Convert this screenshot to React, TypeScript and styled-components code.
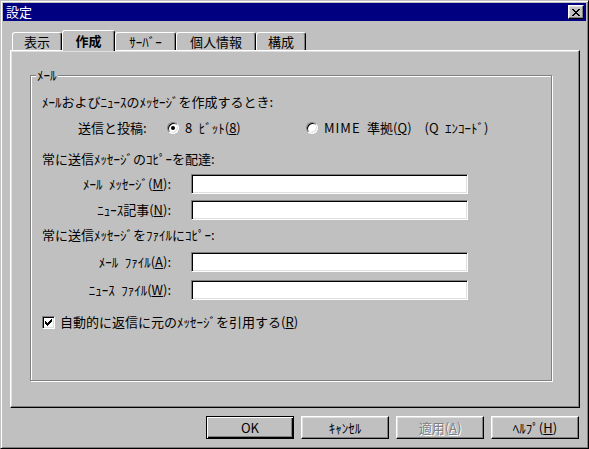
import React from 'react';
import styled, { createGlobalStyle, css } from 'styled-components';

const GlobalStyle = createGlobalStyle`
  html, body { margin: 0; padding: 0; background: #c0c0c0; }
  body {
    font-family: "Noto Sans CJK JP", "Noto Sans", sans-serif;
    font-size: 13px;
    color: #000;
  }
  * { box-sizing: border-box; }
`;

const Window = styled.div`
  width: 589px;
  height: 449px;
  background: #c0c0c0;
  border: 1px solid;
  border-color: #c0c0c0 #000 #000 #c0c0c0;
  box-shadow: inset 1px 1px #fff, inset -1px -1px #808080;
  padding: 2px;
  display: flex;
  flex-direction: column;
`;

const TitleBar = styled.div`
  height: 18px;
  flex: none;
  background: #000080;
  display: flex;
  align-items: center;
  justify-content: space-between;
  padding: 0 2px 0 2px;
`;

const TitleText = styled.span`
  color: #fff;
  line-height: 14px;
  margin-left: 1px;
`;

const CloseButton = styled.button`
  width: 16px;
  height: 14px;
  padding: 0;
  background: #c0c0c0;
  border: 1px solid;
  border-color: #fff #000 #000 #fff;
  box-shadow: inset -1px -1px #808080, inset 1px 1px #dfdfdf;
  display: flex;
  align-items: center;
  justify-content: center;
`;

const Body = styled.div`
  flex: 1;
  display: flex;
  flex-direction: column;
  padding: 9px 6px 0 7px;
`;

const TabRow = styled.div`
  height: 20px;
  display: flex;
  align-items: flex-end;
  padding-left: 2px;
  position: relative;
  z-index: 1;
`;

const Tab = styled.div<{ $w: number; $active?: boolean }>`
  width: ${(p) => p.$w}px;
  height: ${(p) => (p.$active ? 21 : 18)}px;
  margin-bottom: ${(p) => (p.$active ? -1 : 0)}px;
  background: #c0c0c0;
  border-left: 1px solid #fff;
  border-top: 1px solid #fff;
  border-right: 1px solid #000;
  border-radius: 3px 3px 0 0;
  box-shadow: inset -1px 0 #808080;
  display: flex;
  align-items: center;
  justify-content: center;
  line-height: 14px;
  padding-top: ${(p) => (p.$active ? 0 : 1)}px;
  font-weight: ${(p) => (p.$active ? 700 : 400)};
`;

const Panel = styled.div`
  height: 358px;
  flex: none;
  border: 1px solid;
  border-color: #fff #000 #000 #fff;
  box-shadow: inset -1px -1px #808080, inset 1px 1px #dfdfdf;
  padding: 24px 0 0 19px;
`;

const GroupBox = styled.div`
  position: relative;
  width: 522px;
  height: 306px;
  border: 1px solid #808080;
  box-shadow: 1px 1px 0 #fff, inset 1px 1px 0 #fff;
  padding: 19px 0 0 11px;
  display: flex;
  flex-direction: column;
`;

const Legend = styled.span`
  position: absolute;
  top: -8px;
  left: 5px;
  padding: 0 1px;
  background: #c0c0c0;
  line-height: 14px;
`;

const TextRow = styled.div<{ $mt?: number }>`
  height: 14px;
  line-height: 14px;
  margin-top: ${(p) => p.$mt ?? 0}px;
  display: flex;
  align-items: center;
  white-space: nowrap;
`;

const Indented = styled.span<{ $ml: number; $w: number }>`
  margin-left: ${(p) => p.$ml}px;
  width: ${(p) => p.$w}px;
  flex: none;
`;

const RadioOption = styled.label<{ $w?: number }>`
  display: flex;
  align-items: center;
  gap: 6px;
  ${(p) => (p.$w ? css`width: ${p.$w}px;` : '')}
  flex: none;
`;

const Latin = styled.span`
  letter-spacing: 1px;
`;

const RadioCircle = styled.span<{ $checked?: boolean }>`
  width: 12px;
  height: 12px;
  flex: none;
  border-radius: 50%;
  background: #fff;
  border: 1px solid;
  border-color: #808080 #fff #fff #808080;
  box-shadow: inset 1px 1px #000, inset -1px -1px #dfdfdf;
  display: flex;
  align-items: center;
  justify-content: center;
  &::after {
    content: '';
    width: 4px;
    height: 4px;
    border-radius: 50%;
    background: ${(p) => (p.$checked ? '#000' : 'transparent')};
  }
`;

const FieldRow = styled.div<{ $mt: number }>`
  height: 20px;
  margin-top: ${(p) => p.$mt}px;
  display: flex;
  align-items: center;
`;

const FieldLabel = styled.span`
  width: 129px;
  flex: none;
  text-align: right;
  line-height: 14px;
  white-space: nowrap;
`;

const TextBox = styled.div`
  margin-left: 20px;
  width: 277px;
  height: 20px;
  flex: none;
  background: #fff;
  border: 1px solid;
  border-color: #808080 #fff #fff #808080;
  box-shadow: inset 1px 1px #000, inset -1px -1px #dfdfdf;
`;

const CheckRow = styled.label`
  height: 14px;
  margin-top: 15px;
  display: flex;
  align-items: center;
  gap: 5px;
  line-height: 14px;
  white-space: nowrap;
`;

const CheckBox = styled.span`
  width: 13px;
  height: 13px;
  flex: none;
  background: #fff;
  border: 1px solid;
  border-color: #808080 #fff #fff #808080;
  box-shadow: inset 1px 1px #000, inset -1px -1px #dfdfdf;
  display: flex;
  align-items: center;
  justify-content: center;
`;

const ButtonRow = styled.div`
  display: flex;
  justify-content: flex-end;
  gap: 7px;
  margin-top: 8px;
  padding-right: 1px;
`;

const Button = styled.button<{ $default?: boolean }>`
  width: 88px;
  height: 23px;
  padding: 0;
  font-family: inherit;
  font-size: 13px;
  line-height: 14px;
  color: #000;
  background: #c0c0c0;
  border: 1px solid;
  border-color: #fff #000 #000 #fff;
  box-shadow: inset -1px -1px #808080, inset 1px 1px #dfdfdf;
  ${(p) =>
    p.$default &&
    css`
      border-color: #000;
      box-shadow: inset 1px 1px #fff, inset -1px -1px #000, inset -2px -2px #808080;
    `}
  &:disabled {
    color: #808080;
    text-shadow: 1px 1px 0 #fff;
  }
`;

const CloseGlyph = () => (
  <svg width="8" height="7" viewBox="0 0 8 7" shapeRendering="crispEdges">
    <path
      fill="#000"
      d="M0 0h2v1h-2zM6 0h2v1h-2zM1 1h2v1h-2zM5 1h2v1h-2zM2 2h4v1h-4zM3 3h2v1h-2zM2 4h4v1h-4zM1 5h2v1h-2zM5 5h2v1h-2zM0 6h2v1h-2zM6 6h2v1h-2z"
    />
  </svg>
);

const CheckGlyph = () => (
  <svg width="7" height="7" viewBox="0 0 7 7" shapeRendering="crispEdges">
    <path
      fill="#000"
      d="M6 0h1v1h-1zM5 1h2v1h-2zM0 2h1v1h-1zM4 2h3v1h-3zM0 3h2v1h-2zM3 3h3v1h-3zM0 4h5v1h-5zM1 5h3v1h-3zM2 6h1v1h-1z"
    />
  </svg>
);

const tabs = [
  { label: '表示', w: 50 },
  { label: '作成', w: 53, active: true },
  { label: 'ｻｰﾊﾞｰ', w: 61 },
  { label: '個人情報', w: 80 },
  { label: '構成', w: 50 },
];

export default function App() {
  return (
    <>
      <GlobalStyle />
      <Window>
        <TitleBar>
          <TitleText>設定</TitleText>
          <CloseButton aria-label="閉じる">
            <CloseGlyph />
          </CloseButton>
        </TitleBar>
        <Body>
          <TabRow>
            {tabs.map((t) => (
              <Tab key={t.label} $w={t.w} $active={t.active}>
                {t.label}
              </Tab>
            ))}
          </TabRow>
          <Panel>
            <GroupBox>
              <Legend>ﾒｰﾙ</Legend>
              <TextRow>ﾒｰﾙおよびﾆｭｰｽのﾒｯｾｰｼﾞを作成するとき:</TextRow>
              <TextRow $mt={12}>
                <Indented $ml={36} $w={89}>送信と投稿:</Indented>
                <RadioOption $w={139}>
                  <RadioCircle $checked />
                  <span>
                    8{'\u2002'}ﾋﾞｯﾄ(<u>8</u>)
                  </span>
                </RadioOption>
                <RadioOption>
                  <RadioCircle />
                  <span>
                    <Latin>MIME</Latin>
                    {'\u2002'}準拠(<u>Q</u>){'\u2002\u2002'}(Q{'\u2002'}ｴﾝｺｰﾄﾞ)
                  </span>
                </RadioOption>
              </TextRow>
              <TextRow $mt={17}>常に送信ﾒｯｾｰｼﾞのｺﾋﾟｰを配達:</TextRow>
              <FieldRow $mt={8}>
                <FieldLabel>
                  ﾒｰﾙ{'\u2002'}ﾒｯｾｰｼﾞ(<u>M</u>):
                </FieldLabel>
                <TextBox />
              </FieldRow>
              <FieldRow $mt={6}>
                <FieldLabel>
                  ﾆｭｰｽ記事(<u>N</u>):
                </FieldLabel>
                <TextBox />
              </FieldRow>
              <TextRow $mt={8}>常に送信ﾒｯｾｰｼﾞをﾌｧｲﾙにｺﾋﾟｰ:</TextRow>
              <FieldRow $mt={10}>
                <FieldLabel>
                  ﾒｰﾙ{'\u2002'}ﾌｧｲﾙ(<u>A</u>):
                </FieldLabel>
                <TextBox />
              </FieldRow>
              <FieldRow $mt={8}>
                <FieldLabel>
                  ﾆｭｰｽ{'\u2002'}ﾌｧｲﾙ(<u>W</u>):
                </FieldLabel>
                <TextBox />
              </FieldRow>
              <CheckRow>
                <CheckBox>
                  <CheckGlyph />
                </CheckBox>
                <span>
                  自動的に返信に元のﾒｯｾｰｼﾞを引用する(<u>R</u>)
                </span>
              </CheckRow>
            </GroupBox>
          </Panel>
          <ButtonRow>
            <Button $default>OK</Button>
            <Button>ｷｬﾝｾﾙ</Button>
            <Button disabled>
              適用(<u>A</u>)
            </Button>
            <Button>
              ﾍﾙﾌﾟ(<u>H</u>)
            </Button>
          </ButtonRow>
        </Body>
      </Window>
    </>
  );
}
